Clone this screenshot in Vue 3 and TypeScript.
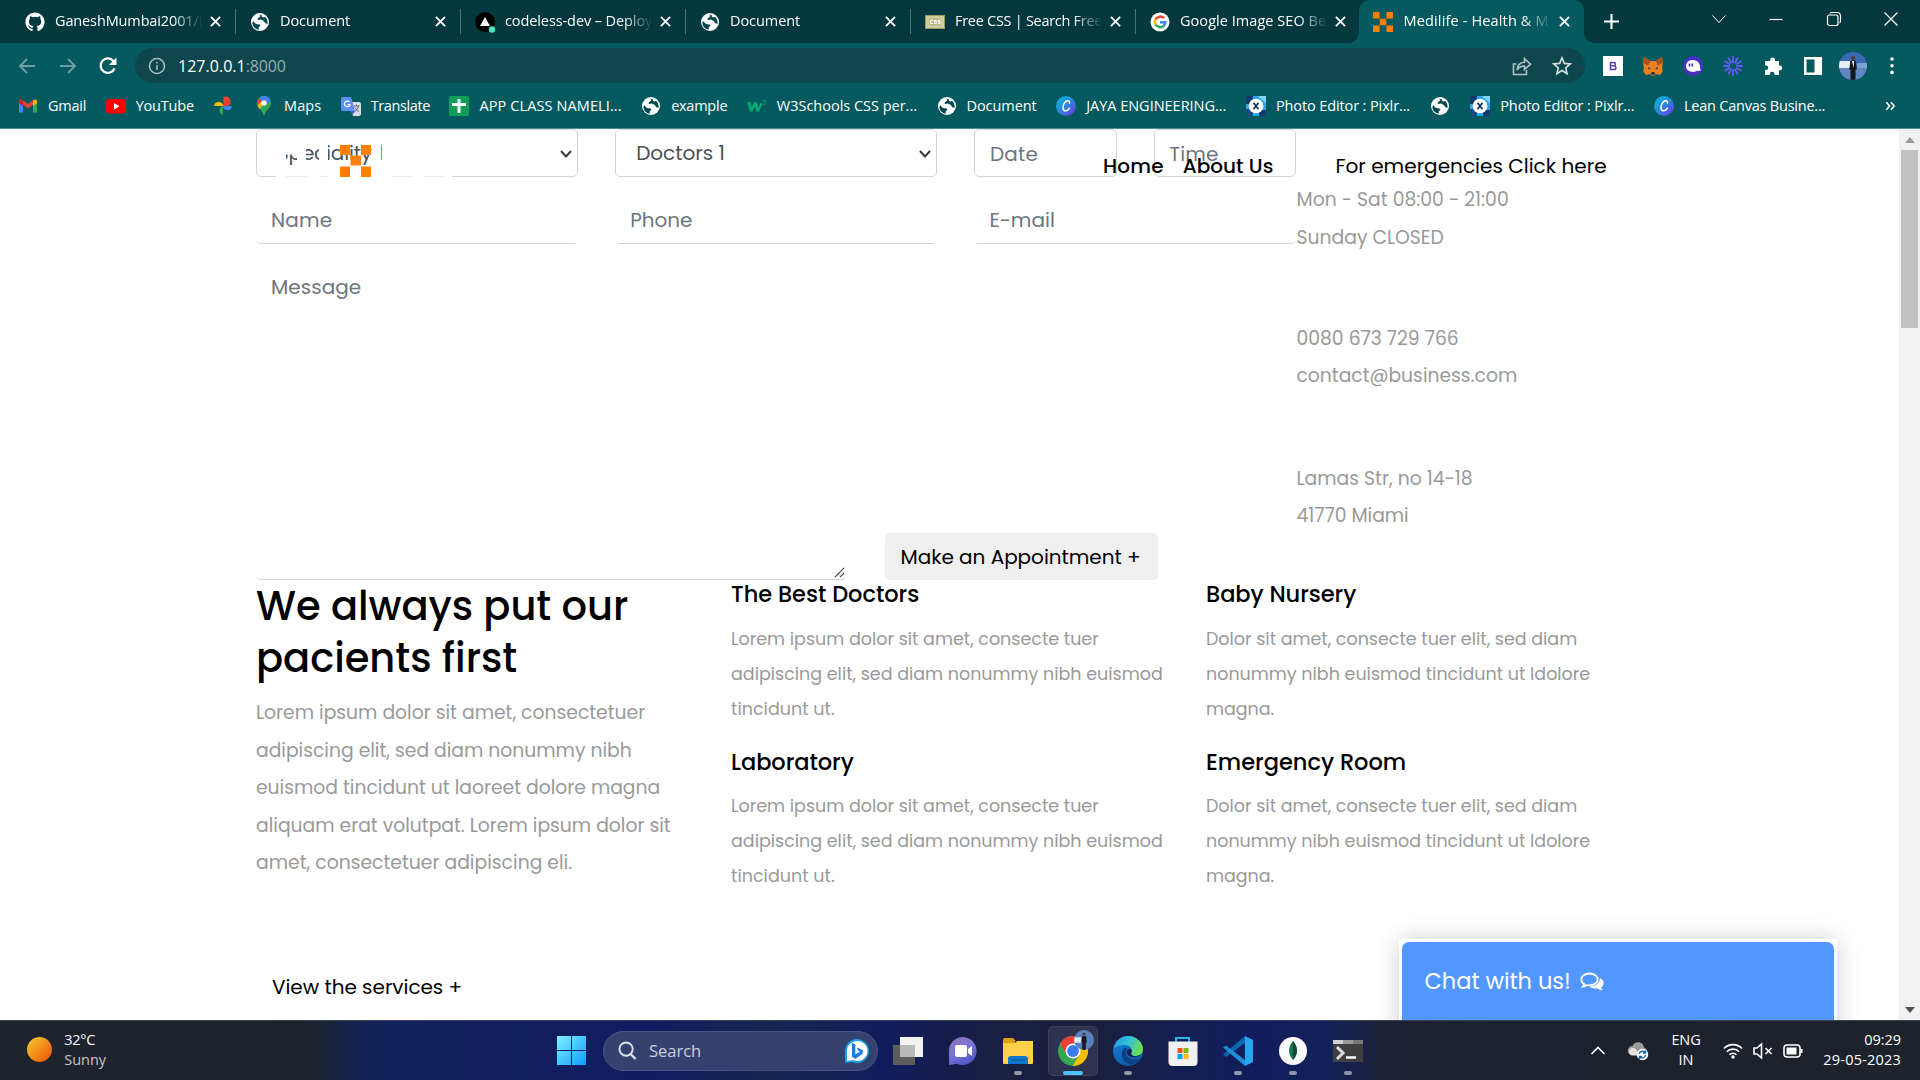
<script setup lang="ts">
type FitEl = HTMLElement

// Spreads letters so that a line takes the given width in pixels.
const vFit = {
  mounted(el: FitEl, binding: { value: number }) {
    const n = (el.textContent || '').trim().length
    const natural = el.getBoundingClientRect().width
    if (n > 1) el.style.letterSpacing = `${(binding.value + 1.2 - natural) / n}px`
  }
}

const globe =
  '<circle cx="10" cy="10" r="9" fill="#fff"/><path d="M3.2 9.2 6 12l3.2.4c1.6.4 1.4 1.600 .4 2.200l-1 .8.2 2.4A8 8 0 0 1 2.300 11ZM8.600 2.800c2.200.4 2 1.700.7 2.500L7.600 6.500l.3 1.400 3.100-.4 2.400 1.300 2.300 2.800 1.800.2c.4-2.400-.4-5-2.300-6.800l-1.600.6-1.800-.9-.2-1.800Z" fill="#04474d"/>'
const canva =
  '<defs><linearGradient id="cv" x1="0" y1="0" x2="1" y2="1"><stop offset="0" stop-color="#05bfd0"/><stop offset=".5" stop-color="#2a86e0"/><stop offset="1" stop-color="#7d2ae8"/></linearGradient></defs><circle cx="10" cy="10" r="10" fill="url(#cv)"/><path d="M13.500 7.200c.2-1.600-.5-2.500-1.700-2.500-2.500 0-4.800 3.500-4.800 6.700 0 2.200 1 3.400 2.600 3.400 1.500 0 2.900-1 3.800-2.600" fill="none" stroke="#fff" stroke-width="1.500" stroke-linecap="round"/>'
const pixlr =
  '<path d="M0 0h20v20H0z" fill="#2ea8e8"/><path d="M0 0h7v8H0zM13 14h7v6h-7z" fill="#153a6e"/><path d="M0 13h7v7H0z" fill="#1b4a86"/><path d="M12 0h8v7z" fill="#7fd6fb"/><circle cx="10" cy="10" r="7.300" fill="#fff"/><path d="m7.500 6.700 5 6.600m0-6.600-5 6.600" stroke="#153060" stroke-width="1.700"/>'

const icons: Record<string, string> = {
  github:
    '<path fill="#fff" transform="scale(.833)" d="M12 .5C5.650.5.5 5.650.5 12c0 5.100 3.300 9.400 7.900 10.900.6.1.8-.2.8-.6v-2.200c-3.200.7-3.900-1.400-3.900-1.400-.5-1.300-1.300-1.700-1.300-1.700-1-.7.1-.7.1-.7 1.200.1 1.800 1.200 1.800 1.200 1 1.800 2.700 1.300 3.400 1 .1-.8.4-1.300.7-1.600-2.600-.3-5.300-1.300-5.300-5.700 0-1.300.5-2.300 1.200-3.100-.1-.3-.5-1.500.1-3.100 0 0 1-.3 3.200 1.200a11 11 0 0 1 5.800 0C17.200 4.700 18.200 5 18.200 5c.6 1.600.2 2.800.1 3.100.7.8 1.200 1.800 1.200 3.100 0 4.400-2.700 5.400-5.300 5.700.4.4.8 1.100.8 2.100v3.200c0 .3.2.7.8.6 4.600-1.500 7.700-5.800 7.700-10.800C23.500 5.650 18.350.5 12 .5Z"/>',
  globe,
  canva,
  pixlr,
  vercel:
    '<circle cx="10" cy="10" r="10" fill="#000"/><path d="m10 5 5 9H5z" fill="#fff"/><circle cx="17" cy="17.500" r="3.200" fill="#50e3c2"/>',
  freecss:
    '<path d="M0 3h20v14H0z" fill="#9a9a5c"/><path d="M1 4h18v12H1z" fill="#cfcda0"/><path d="M4 6.500h12v7H4z" fill="#b9b685"/><path d="M8 8.300H5.500v3H8M11.600 8.300H9.300v1.500h2.200v1.500H9M15.300 8.300H13v1.500h2.200v1.500h-2.400" fill="none" stroke="#fff" stroke-width="1"/>',
  google:
    '<circle cx="10" cy="10" r="9.500" fill="#fff"/><g fill="none" stroke-width="2.500"><path d="M14 6.200A5.300 5.300 0 0 0 5.500 7.500" stroke="#ea4335"/><path d="M5.500 7.500a5.300 5.300 0 0 0 0 5" stroke="#fbbc05"/><path d="M5.500 12.500a5.300 5.300 0 0 0 8 1.500" stroke="#34a853"/><path d="M13.500 14a5 5 0 0 0 1.700-3.800H10" stroke="#4285f4"/></g>',
  medilife: '<path fill="#ff7f00" d="M0 0h6.600v6.600H0zM13.400 0H20v6.600h-6.600zM6.700 6.700h6.600v6.600H6.700zM0 13.400h6.600V20H0zM13.400 13.400H20V20h-6.600z"/>',
  gmail:
    '<path d="M1 5v11.500h4V8z" fill="#4285f4"/><path d="M19 5v11.500h-4V8z" fill="#34a853"/><path d="M1 5.500C1 3.500 3 3 4.500 4L10 8l5.500-4C17 3 19 3.500 19 5.500L10 12.500z" fill="#ea4335"/><path d="M15 4.500C17 3 19 3.500 19 5.500V7l-4 3z" fill="#fbbc04"/><path d="M5 4.500C3 3 1 3.500 1 5.500V7l4 3z" fill="#c5221f"/>',
  youtube: '<rect x="0" y="3" width="20" height="14.500" rx="4" fill="#f00"/><path d="m8 7 5.500 3.200L8 13.500z" fill="#fff"/>',
  photos:
    '<path d="M10.400 1v9.300h4.300A4.800 4.800 0 0 0 10.400 1" fill="#ea4335"/><path d="M1 10a4.700 4.700 0 0 1 9.300 0z" fill="#fbbc04"/><path d="M19 10.300a4.700 4.700 0 0 1-9.300 0z" fill="#4285f4"/><path d="M9.900 19a4.700 4.700 0 0 1 0-9z" fill="#34a853"/>',
  maps:
    '<path d="M10 0a7 7 0 0 0-7 7c0 5 5 6 7 13 2-7 7-8 7-13a7 7 0 0 0-7-7" fill="#34a853"/><path d="M10 0a7 7 0 0 1 6.500 4.500L10 11 5 2.300A7 7 0 0 1 10 0" fill="#4285f4"/><path d="M5 2.300A7 7 0 0 0 3.500 9.500L8 5z" fill="#ea4335"/><path d="M3.500 9.500 5.500 13 12.500 4.500 8 5z" fill="#fbbc04"/><circle cx="10" cy="7" r="2.600" fill="#fff"/>',
  translate:
    '<path d="M8 6h10a2 2 0 0 1 2 2v10a2 2 0 0 1-2 2h-6z" fill="#d8dce0"/><path d="M2 1h8l4 14H2a2 2 0 0 1-2-2V3a2 2 0 0 1 2-2" fill="#5b91f5"/><path d="m9 15h5l-2.500 4z" fill="#3a5fb5"/><path d="M8.500 6.200A2.800 2.800 0 1 0 9 8.500H6.500" fill="none" stroke="#fff" stroke-width="1.200"/><path d="M12.500 10h6M15.500 8.500V10m2 0c-.5 3-2 4.500-4 5.500m.5-4c1 2 2.500 3.500 4 4" fill="none" stroke="#667" stroke-width="1"/>',
  sheets: '<rect width="20" height="20" rx="1.500" fill="#0f9d58"/><path d="M8.500 3h3v4H17v3h-5.500v7h-3v-7H3V7h5.500z" fill="#fff"/>',
  w3: '<path d="M0 6h3.200l1.500 5L7.300 6h2.800l1.200 5.500L14 6.500l1.300 1.500L12 15.500H9.400L8 10.500l-2.600 5H3z" fill="#04aa6d"/><path d="M15.500 4.200h3l-1.300 1.600c1.800 0 1.800 2.600-.2 2.600-.9 0-1.500-.3-1.700-.9" fill="none" stroke="#04aa6d" stroke-width=".9"/>'
}

const tabs = [
  { icon: 'github', title: 'GaneshMumbai2001/l', w: 146 },
  { icon: 'globe', title: 'Document', w: 69 },
  { icon: 'vercel', title: 'codeless-dev – Deploy', w: 146 },
  { icon: 'globe', title: 'Document', w: 69 },
  { icon: 'freecss', title: 'Free CSS | Search Free', w: 146 },
  { icon: 'google', title: 'Google Image SEO Be', w: 145 },
  { icon: 'medilife', title: 'Medilife - Health & M', w: 144 }
]

const bookmarks = [
  { icon: 'gmail', title: 'Gmail', w: 37 },
  { icon: 'youtube', title: 'YouTube', w: 57 },
  { icon: 'photos', title: '', w: 0 },
  { icon: 'maps', title: 'Maps', w: 36 },
  { icon: 'translate', title: 'Translate', w: 58 },
  { icon: 'sheets', title: 'APP CLASS NAMELI...', w: 141 },
  { icon: 'globe', title: 'example', w: 55 },
  { icon: 'w3', title: 'W3Schools CSS per...', w: 139 },
  { icon: 'globe', title: 'Document', w: 69 },
  { icon: 'canva', title: 'JAYA ENGINEERING...', w: 139 },
  { icon: 'pixlr', title: 'Photo Editor : Pixlr...', w: 133 },
  { icon: 'globe', title: '', w: 0 },
  { icon: 'pixlr', title: 'Photo Editor : Pixlr...', w: 133 },
  { icon: 'canva', title: 'Lean Canvas Busine...', w: 140 }
]

const contact = [
  [{ t: 'Mon - Sat 08:00 - 21:00', w: 211 }, { t: 'Sunday CLOSED', w: 146 }],
  [{ t: '0080 673 729 766', w: 161 }, { t: 'contact@business.com', w: 219.500 }],
  [{ t: 'Lamas Str, no 14-18', w: 175 }, { t: '41770 Miami', w: 111 }]
]

const intro = [
  { t: 'Lorem ipsum dolor sit amet, consectetuer', w: 388 },
  { t: 'adipiscing elit, sed diam nonummy nibh', w: 374.500 },
  { t: 'euismod tincidunt ut laoreet dolore magna', w: 403 },
  { t: 'aliquam erat volutpat. Lorem ipsum dolor sit', w: 413.500 },
  { t: 'amet, consectetuer adipiscing eli.', w: 315 }
]

const lorem = [
  { t: 'Lorem ipsum dolor sit amet, consecte tuer', w: 366.500 },
  { t: 'adipiscing elit, sed diam nonummy nibh euismod', w: 430.500 },
  { t: 'tincidunt ut.', w: 102.500 }
]
const dolor = [
  { t: 'Dolor sit amet, consecte tuer elit, sed diam', w: 370 },
  { t: 'nonummy nibh euismod tincidunt ut ldolore', w: 383 },
  { t: 'magna.', w: 67 }
]
const services = [
  [
    { title: 'The Best Doctors', w: 187, lines: lorem },
    { title: 'Laboratory', w: 121.500, lines: lorem }
  ],
  [
    { title: 'Baby Nursery', w: 149, lines: dolor },
    { title: 'Emergency Room', w: 199, lines: dolor }
  ]
]
</script>

<template>
  <div class="screen">
    <header class="chrome">
      <div class="tabstrip">
        <div v-for="(tab, i) in tabs" :key="i" class="tab" :class="{ active: i === 6, last: i >= 5 }">
          <svg class="fav" viewBox="0 0 20 20" v-html="icons[tab.icon]"></svg>
          <div class="title"><span v-fit="tab.w">{{ tab.title }}</span></div>
          <svg class="x" viewBox="0 0 12 12"><path d="m1 1 10 10M11 1 1 11" stroke="#fff" stroke-width="2" /></svg>
        </div>
        <svg class="plus" viewBox="0 0 16 16"><path d="M8 0v16M0 8h16" stroke="#fff" stroke-width="2.200" /></svg>
        <div class="winctl">
          <svg viewBox="0 0 16 16"><path d="m1.500 4.500 6.500 7 6.500-7" /></svg>
          <svg viewBox="0 0 16 16"><path d="M1.500 8.500h13" /></svg>
          <svg viewBox="0 0 16 16"><rect x="1.500" y="4" width="10.500" height="10.500" rx="2" /><path d="M4 2.500q.6-1 2-1h5q3.500 0 3.500 3.500v5q0 1.500-1 2" /></svg>
          <svg viewBox="0 0 16 16"><path d="m1.500 1.500 13 13m0-13-13 13" /></svg>
        </div>
      </div>
      <div class="toolbar">
        <svg class="nav" viewBox="0 0 20 20"><path d="M18 10H3m7-7-7 7 7 7" /></svg>
        <svg class="nav" viewBox="0 0 20 20"><path d="M2 10h15m-7-7 7 7-7 7" /></svg>
        <svg class="nav reload" viewBox="0 0 20 20"><path d="M16.500 12.300A7.200 7.200 0 1 1 15.300 5l1.500 1.700" /><path d="M18.500 1.500V9H11z" fill="#fff" stroke="none" /></svg>
        <div class="omnibox">
          <svg class="info" viewBox="0 0 18 18"><circle cx="9" cy="9" r="7.500" /><path d="M9 8v5M9 4.800v1.700" /></svg>
          <span v-fit="66.500" class="host">127.0.0.1</span><span v-fit="39" class="port">:8000</span>
          <svg class="share" viewBox="0 0 20 20"><path d="M4.500 8H1.500v10.500h13V14M5 14c.4-5 3-7.500 7.500-7.700V2.500l6 5.700-6 5.300V10C9 10 6.800 11 5 14Z" /></svg>
          <svg class="star" viewBox="0 0 20 20"><path d="m10 1.800 2.300 5.600 6 .5-4.600 3.900 1.400 5.900-5.100-3.200-5.100 3.200 1.400-5.900L1.700 7.900l6-.5z" /></svg>
        </div>
        <div class="exts">
          <svg viewBox="0 0 20 20"><path d="M0 0h20v20H0z" fill="#fff" /><path d="M7.500 6.500h3c2.500 0 2.500 3.300 0 3.300h-3V6.500Zm0 3.300h3.500c2.500 0 2.500 3.700 0 3.700H7.500z" fill="none" stroke="#5a3bb0" stroke-width="1.500" /></svg>
          <svg viewBox="0 0 20 20"><path d="m1 1 6.500 4h5L19 1l1 6-1 4.500.8 4-2.800 3.500-4-1-1.500 1.500h-3L7 18l-4 1-2.800-3.500.8-4L0 7z" fill="#e8821e" /><path d="m1 1 6.500 4L5 9.500 0 7zM19 1l-6.500 4L15 9.500 20 7z" fill="#a8541c" /><path d="m5 11 3 1.500-2.500.8zM15 11l-3 1.500 2.500.8zM8 17l1-1h2l1 1v1.500H8z" fill="#27303a" /></svg>
          <svg viewBox="0 0 20 20"><circle cx="10" cy="10" r="10" fill="#4a2fc4" /><path d="M3 9.500C3.500 5.500 7 3.800 10 4c4.500.2 7 3.500 7 6.500 0 2.500 1 3.500.5 4-1 1-3 0-4 .5-1.500.8-3 1.200-5 .8C5 15.200 2.700 13 3 9.500Z" fill="#fff" /><path d="M6.500 7.500v3M9.300 7.500v3" stroke="#3d28a8" stroke-width="1.500" /></svg>
          <svg viewBox="0 0 20 20"><g stroke="#635bff" stroke-width="1.800" stroke-linecap="round"><path v-for="a in 12" :key="a" d="M10 6V1" :transform="`rotate(${a * 30} 10 10)`" /></g></svg>
          <svg viewBox="0 0 20 20"><path d="M3 5h4.200V4a2.400 2.400 0 0 1 4.800 0v1h4v4.500h.8a2.400 2.400 0 0 1 0 4.800H16V19h-4.500v-1a2.300 2.300 0 0 0-4.600 0v1H2v-5h1a2.200 2.200 0 0 0 0-4.400H2V6q0-1 1-1" fill="#fff" /></svg>
          <svg viewBox="0 0 20 20"><path d="M1 1h18v18H1zm2.500 2.500v13h8v-13z" fill="#fff" fill-rule="evenodd" /></svg>
          <svg class="ava" viewBox="0 0 28 28"><defs><clipPath id="av"><circle cx="14" cy="14" r="14" /></clipPath></defs><g clip-path="url(#av)"><path d="M0 0h28v28H0z" fill="#3b69b5" /><path d="M0 9h11v7H0z" fill="#e4eef4" /><path d="M18 11h10v5H18z" fill="#7fa3cf" /><path d="M0 16h28v12H0z" fill="#7392c4" opacity=".7" /><path d="M11.500 9q2.500-1.500 5 0l1.300 8-1.300 1v10h-5V18l-1.300-1z" fill="#15171e" /><path d="M13 9h2l-.5 7z" fill="#fff" /><circle cx="14" cy="6" r="2" fill="#553a32" /></g></svg>
          <svg viewBox="0 0 20 20"><circle cx="10" cy="3" r="1.800" fill="#fff" /><circle cx="10" cy="9.700" r="1.800" fill="#fff" /><circle cx="10" cy="16.400" r="1.800" fill="#fff" /></svg>
        </div>
      </div>
      <div class="bookmarks">
        <div v-for="(b, i) in bookmarks" :key="i" class="bm">
          <svg viewBox="0 0 20 20" v-html="icons[b.icon]"></svg>
          <div v-if="b.title" class="bmt" :style="{ width: b.w + 'px' }"><span v-fit="b.w">{{ b.title }}</span></div>
        </div>
        <svg class="more" viewBox="0 0 12 12"><path d="m1.500 2 3.500 4-3.500 4M6.500 2 10 6l-3.500 4" fill="none" stroke="#fff" stroke-width="1.700" /></svg>
      </div>
    </header>

    <main class="page">
      <div class="content">
        <section class="booking">
          <div class="form">
            <div class="row">
              <div class="field boxed select"><span v-fit="105">Speciality 1</span><svg viewBox="0 0 14 10"><path d="m2 2 5 5.500L12 2" /></svg></div>
              <div class="field boxed select"><span v-fit="87.500">Doctors 1</span><svg viewBox="0 0 14 10"><path d="m2 2 5 5.500L12 2" /></svg></div>
              <div class="field boxed half"><span v-fit="47">Date</span></div>
              <div class="field boxed half"><span v-fit="48">Time</span></div>
            </div>
            <div class="row">
              <div class="field"><span v-fit="60">Name</span></div>
              <div class="field"><span v-fit="61">Phone</span></div>
              <div class="field"><span v-fit="64.500">E-mail</span></div>
            </div>
            <div class="row">
              <div class="field area">
                <span v-fit="89">Message</span>
                <svg class="grip" viewBox="0 0 12 12"><path d="M1 11 11 1M6.500 11 11 6.500" /></svg>
              </div>
              <button class="book"><span v-fit="239">Make an Appointment +</span></button>
            </div>
          </div>
          <div class="contact">
            <div v-for="(g, i) in contact" :key="i" class="cgroup">
              <div v-for="l in g" :key="l.t"><span v-fit="l.w">{{ l.t }}</span></div>
            </div>
          </div>
        </section>

        <section class="grid">
          <div class="intro">
            <h2><span v-fit="371">We always put our</span><br /><span v-fit="260">pacients first</span></h2>
            <p><template v-for="l in intro" :key="l.t"><span v-fit="l.w">{{ l.t }}</span><br /></template></p>
            <div class="services"><span v-fit="189">View the services +</span></div>
          </div>
          <div v-for="(col, c) in services" :key="c">
            <article v-for="s in col" :key="s.title">
              <h5><span v-fit="s.w">{{ s.title }}</span></h5>
              <p><template v-for="l in s.lines" :key="l.t"><span v-fit="l.w">{{ l.t }}</span><br /></template></p>
            </article>
          </div>
        </section>
      </div>

      <nav class="sitenav">
        <svg class="logo" viewBox="0 0 176 36">
          <path fill="#fff" d="M0 0h10v31H0zM10 0h20v9.500H10zM21 0h9v31h-9zM10 14h3.500v5H10zM43 0h9v31h-9zM54 0h1.500v24H54zM97 0h8v28H97zM0 28h176v6H0z" />
          <path fill="#ff7f00" d="M64 0h10v10H64zM85 0h10v10H85zM74.500 10.500H85v10H74.500zM64 21.500h10V32H64zM85 21.500h10V32H85z" />
          <path fill="#ececec" d="M10 31h21v1H10zM43 31h10v1H43zM116 31h21v1h-21zM148 31h21v1h-21z" />
        </svg>
        <span v-fit="59.500" class="lnk home">Home</span>
        <span v-fit="89.500" class="lnk about">About Us</span>
        <span v-fit="270" class="emg">For emergencies Click here</span>
      </nav>

      <aside class="chat">
        <span v-fit="145">Chat with us!</span>
        <svg viewBox="0 0 24 20"><path d="M9.500 1.500c4.700 0 8.200 2.600 8.200 5.900s-3.500 5.900-8.200 5.900c-1 0-1.800-.1-2.600-.3-1.200.9-2.500 1.400-4 1.600.6-.7 1.100-1.500 1.300-2.500C2.400 11 1.300 9.300 1.300 7.400c0-3.300 3.500-5.900 8.200-5.900Z" fill="none" stroke="#fff" stroke-width="1.800" /><path d="M20 6c2.300 1.200 3.700 3 3.700 5 0 1.700-1 3.200-2.600 4.300.3 1.200.9 2.200 1.700 3-2-.1-3.700-.8-5-1.900-3.300.6-6.600-.2-8.500-1.900 5.500.3 10.700-2.900 10.700-8.500Z" fill="#fff" /></svg>
      </aside>

      <div class="scroll">
        <svg viewBox="0 0 10 6"><path d="M0 6h10L5 0z" fill="#9a9a9a" /></svg>
        <div class="thumb"></div>
        <svg viewBox="0 0 10 6"><path d="M0 0h10L5 6z" fill="#505050" /></svg>
      </div>
    </main>

    <footer class="taskbar">
      <div class="weather">
        <div class="sun"></div>
        <div class="wt"><span v-fit="29.500">32°C</span><span v-fit="40.500" class="dim">Sunny</span></div>
      </div>
      <div class="slot start"><svg viewBox="0 0 29 29"><defs><linearGradient id="wl" x1="0" y1="0" x2="1" y2="1"><stop offset="0" stop-color="#7df3ff" /><stop offset="1" stop-color="#0f9bff" /></linearGradient></defs><path d="M0 0h14v14H0zM15 0h14v14H15zM0 15h14v14H0zM15 15h14v14H15z" fill="url(#wl)" /></svg></div>
      <div class="search">
        <svg viewBox="0 0 20 20"><circle cx="8.500" cy="8.500" r="7" fill="none" stroke="#dde0ea" stroke-width="2" /><path d="m13.500 14 5 5" stroke="#dde0ea" stroke-width="2.400" /></svg>
        <span v-fit="51">Search</span>
        <svg class="bing" viewBox="0 0 26 26"><path d="M13 1a12 12 0 1 1-5 22.900L1 25V13A12 12 0 0 1 13 1Z" fill="#1b9fe8" /><path d="M13.500 3a10 10 0 1 1-4.300 19L3 23V13A10 10 0 0 1 13.500 3Z" fill="#fff" /><path d="m8 5 3.300 1.300v10l5-2.600-2.300-1.200-1.200-3 6 2.500v3.500L11.300 21 8 18.800z" fill="#1a7be0" /></svg>
      </div>
      <div class="slot"><svg viewBox="0 0 30 30"><path d="M0 9h22v20H0z" fill="#5d5d5d" /><path d="M7 1h23v20H7z" fill="#f2f2f2" /><path d="M7 9h15v12H7z" fill="#b9b9b9" /></svg></div>
      <div class="slot"><svg viewBox="0 0 30 30"><defs><linearGradient id="tm" x1="0" y1="0" x2=".6" y2="1"><stop offset="0" stop-color="#9a6fb0" /><stop offset=".5" stop-color="#7a76d6" /><stop offset="1" stop-color="#5257c9" /></linearGradient></defs><path d="M15 1a14 14 0 1 1-6 26.800L1 29V15A14 14 0 0 1 15 1Z" fill="url(#tm)" /><rect x="7" y="9" width="12" height="12" rx="2" fill="#fff" /><path d="m20 13 4-3v10l-4-3z" fill="#fff" /></svg></div>
      <div class="slot dot"><svg viewBox="0 0 30 30"><path d="M0 4q0-2 2-2h8l3 3h-1v5H0z" fill="#dba10b" /><path d="M0 7h12l2-2h16v22q0 1-1 1H1q-1 0-1-1z" fill="#ffd04a" /><path d="M5 28v-5q0-3 3-3h14q3 0 3 3v5z" fill="#1176cf" /><path d="M8 24h14" stroke="#0a4f96" /></svg></div>
      <div class="slot on">
        <svg viewBox="0 0 30 30"><circle cx="15" cy="15" r="15" fill="#34a853" /><path d="M2 7.500A15 15 0 0 1 28 7.500H15L8.500 18.700z" fill="#ea4335" /><path d="M28 7.500A15 15 0 0 1 14.500 30L21.500 18.700 15 7.500z" fill="#fbbc05" /><circle cx="15" cy="15" r="7.500" fill="#fff" /><circle cx="15" cy="15" r="5.900" fill="#3b7df0" /></svg>
        <svg class="mini" viewBox="0 0 28 28"><g clip-path="url(#av)"><path d="M0 0h28v28H0z" fill="#5580be" /><path d="M0 10h11v8H0z" fill="#dcecf5" /><path d="M11 9q3-1.500 6 0l1 8-1.500 1v10h-5V18L10 17z" fill="#191b22" /><circle cx="14" cy="6" r="2" fill="#553a32" /></g></svg>
      </div>
      <div class="slot dot"><svg viewBox="0 0 30 30"><defs><linearGradient id="e1" x1="0" y1="0" x2="1" y2=".3"><stop offset="0" stop-color="#1c9be0" /><stop offset=".55" stop-color="#35c1d8" /><stop offset="1" stop-color="#6bdc56" /></linearGradient><linearGradient id="e2" x1="0" y1="0" x2=".6" y2="1"><stop offset="0" stop-color="#1686d8" /><stop offset="1" stop-color="#0c59a4" /></linearGradient></defs><circle cx="15" cy="15" r="15" fill="url(#e2)" /><path d="M.5 13C2 5 8 0 15 0c8 0 15 6 15 13 0 5-4 7-7.500 7-4 0-5.500-1.500-4-3.500C20 14 18 9 11.500 9 6 9 1.500 11.500.5 13Z" fill="url(#e1)" /><path d="M11 12c-5 7-1 15 6 16 5 .5 8-2 11-6-7 3.500-15 1-15-5 0-3 2-4 2-4s-2-1.500-4-1Z" fill="#0a3f86" /><path d="M17.500 13c2 2 .5 4 .8 5 .8 2.500 5 3 9.700.5-4 4-14 3.500-14-2 0-2 1.500-4 3.500-3.500Z" fill="#12204f" /></svg></div>
      <div class="slot"><svg viewBox="0 0 30 30"><path d="M8 7V2h13v5" fill="none" stroke="#2bb4ee" stroke-width="2" /><path d="M.5 5.500h29V26q0 4-4 4h-21q-4 0-4-4z" fill="#f1f1f1" /><path d="M9.500 12h5v5h-5z" fill="#f25022" /><path d="M15.500 12h5v5h-5z" fill="#7fba00" /><path d="M9.500 18h5v5h-5z" fill="#00a4ef" /><path d="M15.500 18h5v5h-5z" fill="#ffb900" /></svg></div>
      <div class="slot dot"><svg viewBox="0 0 30 30"><path d="M22 30V0l8 4v22z" fill="#29a7ee" /><path d="m0 18.500 3 2.500L22 7V0z" fill="#0b66b0" /><path d="m0 11.500 3-2L22 24v6z" fill="#1f8ed8" /></svg></div>
      <div class="slot dot"><svg viewBox="0 0 30 30"><circle cx="15" cy="15" r="14" fill="#fafafa" /><path d="M15 5c6 7 4.500 14 0 19-4.500-5-6-12 0-19Z" fill="#0b7a52" /><path d="M15 5v19c4.500-5 6-12 0-19Z" fill="#15492f" /></svg></div>
      <div class="slot dot"><svg viewBox="0 0 30 30"><path d="M0 5q0-1 1-1h28q1 0 1 1v20q0 1-1 1H1q-1 0-1-1z" fill="#3f3f3f" /><path d="M0 4h10v4H0z" fill="#d0d0d0" /><path d="M10 4h10v4H10z" fill="#9a9a9a" /><path d="M20 4h10v4H20z" fill="#777" /><path d="m4 11 6 6-6 6" fill="none" stroke="#ddd" stroke-width="3" /><path d="M13 21.500h10" stroke="#fff" stroke-width="2.500" /></svg></div>
      <div class="tray">
        <svg class="up" viewBox="0 0 16 16"><path d="m1.500 11 6.500-6.500L14.500 11" /></svg>
        <svg class="cloud" viewBox="0 0 22 20"><path d="M5 14a4.500 4.500 0 0 1 .5-9A6 6 0 0 1 17 6.500 4 4 0 0 1 18 14z" fill="#9b9b9b" stroke="none" /><path d="M4.500 14.500a4 4 0 0 1 0-7.500c3-.5 6 1 7.500 7.500z" fill="#e2e2e2" stroke="none" /><circle cx="15.500" cy="13.500" r="5.700" fill="#fff" stroke="none" /><path d="M12.300 13a3.300 3.300 0 0 1 6-1.300m.4 2.300a3.300 3.300 0 0 1-6 1.500M18.500 9.500v2.500H16M12.500 18v-2.500H15" stroke="#1168b8" stroke-width="1.400" /></svg>
        <div class="lang"><span v-fit="28">ENG</span><span v-fit="14">IN</span></div>
        <svg class="wifi" viewBox="0 0 20 18"><path d="M1 6.500a12.500 12.500 0 0 1 18 0M3.800 9.800a8.600 8.600 0 0 1 12.400 0M6.500 12.800a5 5 0 0 1 7 0" /><circle cx="10" cy="15" r="1.800" fill="#fff" stroke="none" /></svg>
        <svg class="vol" viewBox="0 0 20 18"><path d="M1 6h3l4.500-4v14L4 12H1zM12.500 6l6 6m0-6-6 6" /></svg>
        <svg class="bat" viewBox="0 0 20 16"><rect x="1" y="2" width="16" height="12" rx="3" /><path d="M3.500 4.500h10v7h-10z" fill="#fff" stroke="none" /><path d="M18.500 6v4" stroke-width="2" /></svg>
        <div class="clock"><span v-fit="35.500">09:29</span><span v-fit="76.500">29-05-2023</span></div>
      </div>
    </footer>
  </div>
</template>

<style>
body {
  background: #fff;
  overflow: hidden;
}
</style>

<style scoped>
* {
  box-sizing: border-box;
}
.screen {
  width: 1920px;
  height: 1080px;
  display: flex;
  flex-direction: column;
  overflow: hidden;
  font-family: "Segoe UI", "Open Sans", sans-serif;
  font-size: 14.5px;
  color: #fff;
}
svg {
  display: block;
  flex: none;
  overflow: visible;
}
span {
  white-space: nowrap;
}
.chrome {
  height: 129px;
  flex: none;
  background: #055a5f;
  border-bottom: 1px solid #4d8d91;
}
.tabstrip {
  height: 43px;
  background: #02383e;
  display: flex;
  align-items: center;
  padding-left: 10.5px;
}
.tab {
  position: relative;
  width: 225px;
  height: 43px;
  flex: none;
  display: flex;
  align-items: center;
  padding-left: 14px;
}
.tab::after {
  content: "";
  position: absolute;
  right: 0;
  top: 9px;
  width: 1px;
  height: 25px;
  background: #4a7479;
}
.tab.last::after {
  display: none;
}
.tab.active {
  margin-left: -1.500px;
  background: #055a5f;
  border-radius: 10px 10px 0 0;
}
.tab.active::before,
.tab.active::after {
  content: "";
  display: block;
  position: absolute;
  top: auto;
  bottom: 0;
  width: 10px;
  height: 10px;
  background: radial-gradient(circle at 0 0, #02383e 9.5px, #055a5f 10px);
}
.tab.active::before {
  left: -10px;
}
.tab.active::after {
  right: -10px;
  background: radial-gradient(circle at 100% 0, #02383e 9.5px, #055a5f 10px);
}
.fav {
  width: 20px;
  height: 20px;
}
.title {
  margin: 0 0 2px 10.500px;
  width: 146px;
  overflow: hidden;
  line-height: 22px;
  -webkit-mask-image: linear-gradient(90deg, #000 118px, transparent 148px);
  mask-image: linear-gradient(90deg, #000 118px, transparent 148px);
}
.x {
  width: 11px;
  height: 11px;
  margin-left: 9px;
}
.plus {
  width: 15px;
  height: 15px;
  margin-left: 19.500px;
}
.winctl {
  display: flex;
  gap: 41.400px;
  margin: 0 21px 6px auto;
}
.winctl svg {
  width: 16px;
  height: 16px;
  fill: none;
  stroke: #fff;
  stroke-width: 1.200;
}
.winctl svg:first-child {
  stroke-width: 1;
}
.toolbar {
  height: 45px;
  display: flex;
  align-items: center;
  padding-left: 17px;
}
.nav {
  width: 20px;
  height: 20px;
  margin-right: 20.500px;
  fill: none;
  stroke: #6f9fa2;
  stroke-width: 1.900;
}
.nav.reload {
  stroke: #fff;
  stroke-width: 2.300;
  margin-right: 17px;
}
.omnibox {
  width: 1450px;
  height: 35px;
  border-radius: 18px;
  background: #0e464d;
  display: flex;
  align-items: center;
  padding-left: 13px;
  font-size: 16px;
}
.info {
  width: 18px;
  height: 18px;
  fill: none;
  stroke: #a9bcbf;
  stroke-width: 1.600;
  margin-right: 12px;
}
.port {
  color: #98aeb1;
}
.share,
.star {
  width: 20px;
  height: 20px;
  fill: none;
  stroke: #b0c2c4;
  stroke-width: 1.600;
}
.share {
  margin-left: auto;
}
.star {
  margin: 0 13px 0 20px;
  stroke: #d5dfe0;
}
.exts {
  display: flex;
  align-items: center;
  gap: 20.200px;
  padding-left: 17.500px;
}
.exts svg {
  width: 20px;
  height: 20px;
}
.exts .ava {
  width: 28px;
  height: 28px;
  margin: 0 -4.500px;
}
.exts svg:last-child {
  margin-left: -.5px;
}
.bookmarks {
  height: 36px;
  display: flex;
  align-items: center;
  gap: 20.700px;
  padding-left: 18px;
}
.bm {
  display: flex;
  align-items: center;
  line-height: 20px;
}
.bm svg {
  width: 20px;
  height: 20px;
}
.bmt {
  margin-left: 10px;
}
.more {
  width: 11px;
  height: 12px;
  margin: 0 24px 0 auto;
}

.page {
  position: relative;
  flex: 1;
  background: #fff;
  overflow: hidden;
  font-family: Poppins, Inter, sans-serif;
  color: #000;
}
.content {
  padding-left: 256px;
}
.booking {
  display: flex;
  height: 451px;
}
.form {
  width: 1040.500px;
}
.row {
  display: flex;
  gap: 37.200px;
  margin-bottom: 19.500px;
}
.field {
  width: 322px;
  height: 47.500px;
  flex: none;
  border-radius: 5px;
  border: 1px solid transparent;
  border-bottom-color: #ced4da;
  padding: 0 14px;
  line-height: 46.500px;
  font-size: 20px;
  color: #6c757d;
}
.boxed {
  border-color: #ced4da;
  line-height: 48px;
}
.select {
  display: flex;
  align-items: center;
  justify-content: space-between;
  color: #495057;
  padding: 0 4.500px 0 20px;
}
.select svg {
  width: 14px;
  height: 10px;
  margin-top: 2px;
  fill: none;
  stroke: #343a40;
  stroke-width: 2;
}
.half {
  width: 142.200px;
  padding-left: 14.500px;
}
.area {
  position: relative;
  width: 590.500px;
  height: 317px;
}
.grip {
  position: absolute;
  right: 1px;
  bottom: 1px;
  width: 11px;
  height: 11px;
  fill: none;
  stroke: #444;
  stroke-width: 1.300;
}
.book {
  width: 273px;
  height: 47px;
  align-self: flex-end;
  margin-left: 1.300px;
  border: 0;
  border-radius: 5px;
  background: #efefef;
  padding: 1px 0 0 15.500px;
  text-align: left;
  font: 400 20px Poppins, Inter, sans-serif;
  color: #000;
}
.contact {
  padding-top: 52.200px;
  font-size: 18.750px;
  line-height: 37.500px;
  color: #999;
}
.cgroup {
  margin-bottom: 63.500px;
}
.cgroup + .cgroup {
  margin-bottom: 65px;
}
.grid {
  display: grid;
  grid-template-columns: 475px 475px 475px;
}
h2 {
  margin: 0 0 10px;
  font-weight: 500;
  font-size: 40px;
  line-height: 52px;
}
p {
  margin: 0;
  color: #999;
}
.intro p {
  font-size: 18.750px;
  line-height: 37.500px;
}
.services {
  margin: 91.500px 0 0 16px;
  line-height: 28px;
  font-size: 20px;
}
h5 {
  margin: 0 0 13.500px;
  font-weight: 500;
  font-size: 22.500px;
  line-height: 28px;
}
article {
  margin-bottom: 21px;
}
article p {
  font-size: 17.500px;
  line-height: 35px;
}
.sitenav {
  position: absolute;
  left: 276px;
  top: 17px;
  display: flex;
  align-items: center;
  height: 40px;
  font-size: 20px;
}
.logo {
  width: 176px;
  height: 36px;
  margin-top: -1px;
  align-self: flex-start;
}
.lnk {
  font-weight: 500;
}
.home {
  margin-left: 651px;
}
.about {
  margin-left: 19px;
}
.emg {
  margin-left: 62px;
}
.chat {
  position: absolute;
  left: 1399px;
  top: 810px;
  width: 438px;
  height: 100px;
  border: 3px solid #fff;
  border-radius: 10px;
  background: #5297ff;
  box-shadow: 0 0 24px rgba(0, 0, 0, 0.2);
  display: flex;
  padding: 24px 0 0 22.500px;
  line-height: 30px;
  font-size: 22.500px;
  color: #fff;
}
.chat::before {
  content: "";
  position: absolute;
  inset: -3px;
  border: 3px solid #fff;
}
.chat svg {
  width: 24px;
  height: 20px;
  margin: 6px 0 0 9px;
}
.scroll {
  position: absolute;
  right: 0;
  top: 0;
  bottom: 0;
  width: 21px;
  background: #f1f1f1;
  display: flex;
  flex-direction: column;
  align-items: center;
  padding: 8px 0 7px;
}
.scroll svg {
  width: 10px;
  height: 6px;
}
.thumb {
  width: 17px;
  height: 178px;
  margin: 7px 0 auto;
  background: #c1c1c1;
}

.taskbar {
  height: 60px;
  flex: none;
  border-top: 1px solid #3b4450;
  display: flex;
  align-items: center;
  font-family: "Segoe UI", "Open Sans", sans-serif;
  background: linear-gradient(90deg, #1f232d 0, #1c222c 310px, #12235a 372px, #111f5e 540px, #101c60 650px, #142650 770px, #111c5c 890px, #1a1e42 990px, #1b1f3c 1090px, #131f52 1180px, #0f1d5c 1260px, #13225a 1330px, #1e2036 1385px, #1b222d 1500px, #1e222b 1920px);
}
.weather {
  width: 544.500px;
  display: flex;
  align-items: center;
  padding-left: 27.300px;
}
.sun {
  width: 25px;
  height: 25px;
  border-radius: 50%;
  margin: 0 12px 2px 0;
  background: linear-gradient(135deg, #f2bd2d 15%, #f0660c 80%);
}
.wt,
.lang,
.clock {
  display: flex;
  flex-direction: column;
  align-items: flex-start;
  line-height: 20px;
  padding-bottom: 1px;
}
.dim {
  color: #c3c5c9;
}
.slot {
  position: relative;
  width: 55px;
  height: 50px;
  flex: none;
  display: flex;
  align-items: center;
  justify-content: center;
}
.slot > svg {
  width: 30px;
  height: 30px;
}
.slot.start {
  width: 54px;
}
.slot.start > svg {
  width: 29px;
  height: 29px;
}
.slot.dot::after,
.slot.on::after {
  content: "";
  position: absolute;
  bottom: 1px;
  left: 23.500px;
  width: 8px;
  height: 4px;
  border-radius: 2px;
  background: #9195a3;
}
.slot.on::after {
  left: 15px;
  width: 20px;
  background: #4cc2ff;
}
.slot.on {
  width: 50px;
  margin: 0 2.500px;
  border-radius: 5px;
  background: rgba(255, 255, 255, 0.09);
  box-shadow: inset 0 0 0 1px rgba(255, 255, 255, 0.07);
}
.slot > .mini {
  position: absolute;
  left: 26px;
  top: 4px;
  width: 20px;
  height: 20px;
}
.search {
  width: 275px;
  height: 40px;
  flex: none;
  margin: 0 2.500px 0 4.500px;
  border-radius: 20px;
  border: 1px solid #4a5585;
  background: #35416f;
  display: flex;
  align-items: center;
  padding: 0 7px 0 14px;
  font-size: 16.500px;
  color: #ccd0dd;
}
.search svg {
  width: 19px;
  height: 19px;
  margin-right: 12px;
}
.search .bing {
  width: 26px;
  height: 26px;
  margin: 0 0 0 auto;
}
.tray {
  flex: 1;
  display: flex;
  align-items: center;
  padding: 0 19px 0 214.500px;
}
.tray svg {
  fill: none;
  stroke: #fff;
  stroke-width: 1.600;
}
.up {
  width: 16px;
  height: 16px;
}
.cloud {
  width: 22px;
  height: 20px;
  margin: 0 22px 0 21px;
}
.lang {
  align-items: center;
  width: 30px;
  margin-right: 22px;
}
.wifi {
  width: 20px;
  height: 18px;
}
.vol {
  width: 20px;
  height: 18px;
  margin: 0 10px;
}
.bat {
  width: 20px;
  height: 16px;
}
.clock {
  margin-left: auto;
  align-items: flex-end;
  padding-bottom: 2px;
}
</style>
